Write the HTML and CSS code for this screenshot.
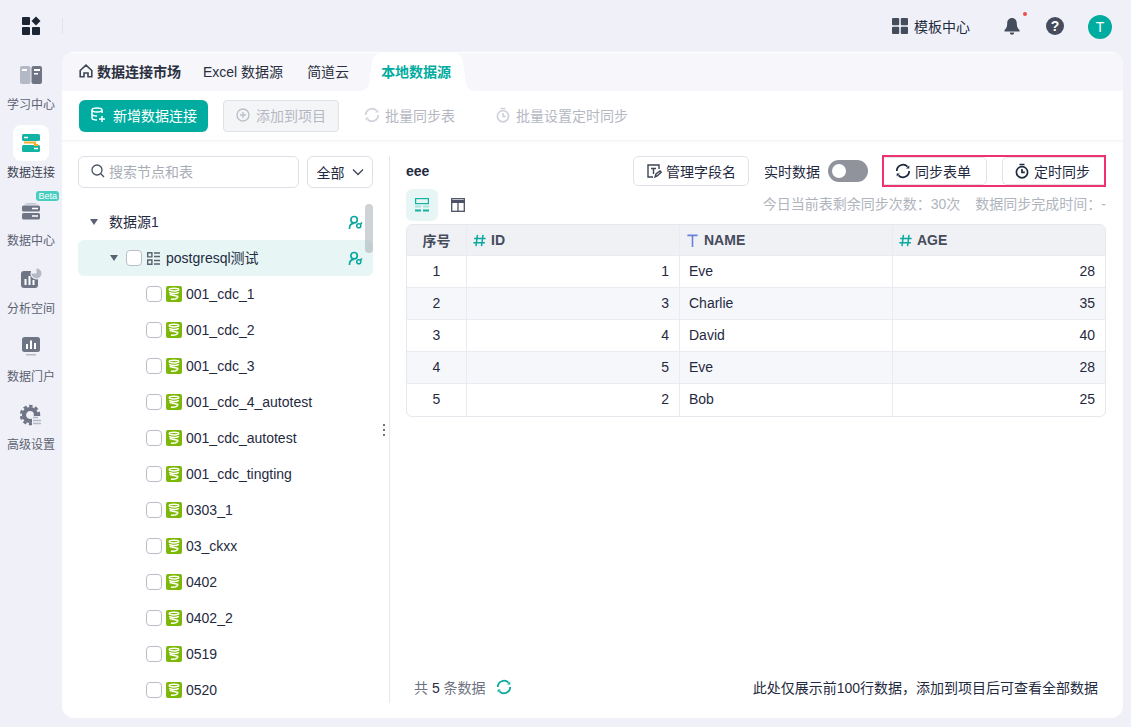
FILE: index.html
```html
<!DOCTYPE html>
<html lang="zh-CN">
<head>
  <meta charset="UTF-8" />
  <title>数据连接</title>
  <link rel="stylesheet" href="styles.css">
</head>
<body>
  <svg class="defs" width="0" height="0">
    <symbol id="i-db" viewBox="0 0 16 16">
      <rect width="16" height="16" rx="2" fill="#7db808"/>
      <g fill="none" stroke="#fff" stroke-width="1.500">
        <ellipse cx="8" cy="3.600" rx="4.800" ry="1.400"/>
        <path d="M3.200 6.400c2.500 1.600 7.500 1.600 9.600 0M3.600 8.600l8.800 1.900M5 13c2.300.6 5 .2 7-1.800"/>
      </g>
    </symbol>
    <symbol id="i-perm" viewBox="0 0 16 16">
      <circle cx="6.500" cy="5" r="3.400" fill="none" stroke="#0aa89e" stroke-width="1.800"/>
      <path d="M1.500 15c0-3.800 2-6 5-6" fill="none" stroke="#0aa89e" stroke-width="1.800"/>
      <circle cx="11.500" cy="11.500" r="2.200" fill="none" stroke="#0aa89e" stroke-width="1.600"/>
      <path d="M13 10l2-2" stroke="#0aa89e" stroke-width="1.600"/>
    </symbol>
    <symbol id="i-sync" viewBox="0 0 16 16">
      <path d="M1.800 8A6.200 6.200 0 0 1 12.500 3.700M14.200 8A6.200 6.200 0 0 1 3.500 12.300" fill="none" stroke="currentColor" stroke-width="1.800"/>
      <path d="M14.300 2.400v3.200h-3.200zM1.700 13.600v-3.200h3.200z" fill="currentColor"/>
    </symbol>
    <symbol id="i-timer" viewBox="0 0 16 16">
      <circle cx="8" cy="9.200" r="5.600" fill="none" stroke="currentColor" stroke-width="1.700"/>
      <path d="M5.500 1.500h5M8 6v3.400h2.800" fill="none" stroke="currentColor" stroke-width="1.700"/>
    </symbol>
    <symbol id="i-num" viewBox="0 0 14 14">
      <path d="M4.800 1 3.200 13M10.800 1 9.200 13M1.200 4.800h12.400M.4 9.400h12.400" fill="none" stroke="#0aa89e" stroke-width="1.600"/>
    </symbol>
    <symbol id="i-text" viewBox="0 0 14 14">
      <path d="M1.500 1.500h11M7 1.500V14" fill="none" stroke="#6b7fdc" stroke-width="1.700"/>
    </symbol>
  </svg>

  <header class="topbar">
    <div class="brand">
      <svg width="20" height="20" viewBox="0 0 20 20" fill="#1d2433">
        <rect x="0" y="1" width="8" height="8" rx="1"/>
        <rect x="0" y="11" width="8" height="8" rx="1"/>
        <rect x="10" y="11" width="8" height="8" rx="1"/>
        <path d="M14 .5 18.500 5 14 9.500 9.500 5z"/>
      </svg>
      <span class="brand-line"></span>
    </div>
    <div class="top-actions">
      <div class="top-link">
        <svg width="16" height="16" viewBox="0 0 16 16" fill="#454c5c">
          <rect width="7.200" height="7.200" rx="1"/><rect x="8.800" width="7.200" height="7.200" rx="1"/>
          <rect y="8.800" width="7.200" height="7.200" rx="1"/><rect x="8.800" y="8.800" width="7.200" height="7.200" rx="1"/>
        </svg>
        <span>模板中心</span>
      </div>
      <div class="bell">
        <svg width="16" height="19" viewBox="0 0 16 19" fill="#454c5c">
          <path d="M8 1c3 0 4.800 2.300 4.800 5.300 0 3.500.8 5 2.700 6.700v1.500H.5V13c1.900-1.700 2.700-3.200 2.700-6.700C3.200 3.300 5 1 8 1z"/>
          <path d="M5.800 15.500h4.400a2.200 2.200 0 0 1-4.400 0z"/>
        </svg>
        <span class="bell-dot"></span>
      </div>
      <span class="help">?</span>
      <span class="avatar">T</span>
    </div>
  </header>

  <div class="layout">
    <nav class="sidenav">
      <a class="nav-item">
        <span class="nav-icon">
          <svg width="24" height="20" viewBox="0 0 24 20">
            <rect x="1" y="1" width="10.500" height="18" rx="2" fill="#b4b9c6"/>
            <rect x="12.500" y="1" width="10.500" height="18" rx="2" fill="#6f7584"/>
            <path d="M3 4h5v2H3zM15 4h6v2h-6zM15 8h4v1.500h-4z" fill="#fff"/>
          </svg>
        </span>
        <span>学习中心</span>
      </a>
      <a class="nav-item active">
        <span class="nav-icon">
          <svg width="20" height="20" viewBox="0 0 20 20">
            <rect x="1" y="1" width="18" height="7" rx="1.500" fill="#12b3a4"/>
            <rect x="1" y="12" width="18" height="7" rx="1.500" fill="#12b3a4"/>
            <path d="M3 9.500h11v2.500h3" fill="none" stroke="#f7ae2b" stroke-width="2.200"/>
            <path d="M3 4.500h4M13 15.500h4" stroke="#fff" stroke-width="1.500"/>
          </svg>
        </span>
        <span>数据连接</span>
      </a>
      <a class="nav-item">
        <span class="nav-icon">
          <svg width="20" height="20" viewBox="0 0 20 20">
            <path d="M3 3.500C4 1.800 16 1.800 17 3.500z" fill="#b4b9c6"/>
            <rect x="1" y="4.500" width="18" height="6" rx="1.500" fill="#6f7584"/>
            <rect x="1" y="12" width="18" height="6.500" rx="1.500" fill="#6f7584"/>
            <path d="M11 7.500h6M11 15h6" stroke="#fff" stroke-width="1.500"/>
          </svg>
        </span>
        <span>数据中心</span>
        <span class="beta">Beta</span>
      </a>
      <a class="nav-item">
        <span class="nav-icon">
          <svg width="24" height="24" viewBox="0 0 24 24">
            <rect x="2" y="4" width="17" height="17" rx="3" fill="#6f7584"/>
            <path d="M6.500 12v6M10.500 9v9M14.500 13v5" stroke="#fff" stroke-width="2"/>
            <circle cx="17.500" cy="6.500" r="6" fill="#f0f1f8"/>
            <path d="M17.500 1.500a5 5 0 1 1-5 5h5z" fill="#b4b9c6"/>
          </svg>
        </span>
        <span>分析空间</span>
      </a>
      <a class="nav-item">
        <span class="nav-icon">
          <svg width="20" height="20" viewBox="0 0 20 20">
            <rect x="1" y="0" width="18" height="15" rx="2.500" fill="#6f7584"/>
            <path d="M6 7v5M10 3.500V12M14 6v6" stroke="#fff" stroke-width="2"/>
            <rect x="5" y="17" width="10" height="1.500" fill="#b4b9c6"/>
          </svg>
        </span>
        <span>数据门户</span>
      </a>
      <a class="nav-item">
        <span class="nav-icon">
          <svg width="22" height="22" viewBox="0 0 22 22">
            <circle cx="10" cy="11" r="6" fill="none" stroke="#6f7584" stroke-width="4.200"/>
            <circle cx="10" cy="11" r="9" fill="none" stroke="#6f7584" stroke-width="2.500" stroke-dasharray="3.400 2.500"/>
            <rect x="12" y="12" width="10" height="10" fill="#f0f1f8"/>
            <path d="M13 13.500h5M13 16.500h8M13 19.500h8" stroke="#b4b9c6" stroke-width="1.700"/>
          </svg>
        </span>
        <span>高级设置</span>
      </a>
    </nav>

    <main class="card">
      <div class="tabs">
        <a class="tab tab-market">
          <svg width="14" height="14" viewBox="0 0 14 14"><path d="M1.200 6.500 7 1.200l5.800 5.300v6.300H9V9H5v3.800H1.200z" fill="none" stroke="#3c4656" stroke-width="1.600"/></svg>
          数据连接市场
        </a>
        <a class="tab">Excel 数据源</a>
        <a class="tab">简道云</a>
        <a class="tab tab-active">
          <svg class="tab-shape" width="117" height="38" viewBox="0 0 117 38"><path d="M0 38c7 0 9.500-4 10.500-10L13 9c.8-5.500 4-9 9-9h73c5 0 8.200 3.500 9 9l2.500 19c1 6 3.500 10 10.500 10z" fill="#fff"/></svg>
          <span>本地数据源</span>
        </a>
      </div>

      <div class="toolbar">
        <button class="btn-primary">
          <svg width="16" height="16" viewBox="0 0 16 16" fill="none" stroke="#fff" stroke-width="1.500">
            <ellipse cx="7" cy="3" rx="5" ry="2"/><path d="M2 3v8c0 1.200 2 2 5 2M2 7c0 1 2 2 5 2M12 3v3"/><path d="M12 9v6M9 12h6"/>
          </svg>
          新增数据连接
        </button>
        <button class="btn-disabled">
          <svg width="14" height="14" viewBox="0 0 14 14" fill="none" stroke="#bcc0c9" stroke-width="1.400"><circle cx="7" cy="7" r="6"/><path d="M7 4v6M4 7h6"/></svg>
          添加到项目
        </button>
        <span class="tool-off"><svg width="16" height="16" class="ic-off"><use href="#i-sync"/></svg>批量同步表</span>
        <span class="tool-off"><svg width="16" height="16" class="ic-off"><use href="#i-timer"/></svg>批量设置定时同步</span>
      </div>

      <div class="content">
        <aside class="tree-panel">
          <div class="tree-search">
            <div class="search">
              <svg width="14" height="14" viewBox="0 0 14 14" fill="none" stroke="#4a5160" stroke-width="1.300"><circle cx="6" cy="6" r="5"/><path d="M9.800 9.800 13 13"/></svg>
              <span>搜索节点和表</span>
            </div>
            <div class="select">全部
              <svg width="12" height="8" viewBox="0 0 12 8" fill="none" stroke="#3c4656" stroke-width="1.300"><path d="M1 1.500 6 6.500l5-5"/></svg>
            </div>
          </div>
          <div class="tree">
            <span class="scroll-thumb"></span>
            <div class="row branch">
              <span class="caret caret-1"></span>
              <span class="label">数据源1</span>
              <svg class="perm" width="15" height="15"><use href="#i-perm"/></svg>
            </div>
            <div class="row branch row-selected">
              <span class="caret caret-2"></span>
              <span class="check"></span>
              <svg width="13" height="13" viewBox="0 0 13 13" class="schema" fill="none" stroke="#5a6170" stroke-width="1.400">
                <path d="M.7.700h4.200v4.200H.7zM.7 8h4.200v4.200H.7zM7 1h6M7 4.500h6M7 8.500h6M7 12h6"/>
              </svg>
              <span class="label">postgresql测试</span>
              <svg class="perm" width="15" height="15"><use href="#i-perm"/></svg>
            </div>
            <div class="row leaf"><span class="check"></span><svg width="16" height="16"><use href="#i-db"/></svg><span class="label">001_cdc_1</span></div>
            <div class="row leaf"><span class="check"></span><svg width="16" height="16"><use href="#i-db"/></svg><span class="label">001_cdc_2</span></div>
            <div class="row leaf"><span class="check"></span><svg width="16" height="16"><use href="#i-db"/></svg><span class="label">001_cdc_3</span></div>
            <div class="row leaf"><span class="check"></span><svg width="16" height="16"><use href="#i-db"/></svg><span class="label">001_cdc_4_autotest</span></div>
            <div class="row leaf"><span class="check"></span><svg width="16" height="16"><use href="#i-db"/></svg><span class="label">001_cdc_autotest</span></div>
            <div class="row leaf"><span class="check"></span><svg width="16" height="16"><use href="#i-db"/></svg><span class="label">001_cdc_tingting</span></div>
            <div class="row leaf"><span class="check"></span><svg width="16" height="16"><use href="#i-db"/></svg><span class="label">0303_1</span></div>
            <div class="row leaf"><span class="check"></span><svg width="16" height="16"><use href="#i-db"/></svg><span class="label">03_ckxx</span></div>
            <div class="row leaf"><span class="check"></span><svg width="16" height="16"><use href="#i-db"/></svg><span class="label">0402</span></div>
            <div class="row leaf"><span class="check"></span><svg width="16" height="16"><use href="#i-db"/></svg><span class="label">0402_2</span></div>
            <div class="row leaf"><span class="check"></span><svg width="16" height="16"><use href="#i-db"/></svg><span class="label">0519</span></div>
            <div class="row leaf"><span class="check"></span><svg width="16" height="16"><use href="#i-db"/></svg><span class="label">0520</span></div>
          </div>
          <span class="drag-dots"></span>
        </aside>

        <section class="detail">
          <div class="detail-head">
            <span class="table-name">eee</span>
            <button class="btn-outline">
              <svg width="16" height="16" viewBox="0 0 16 16" fill="none" stroke="#3c4656" stroke-width="1.400">
                <path d="M13 6V2H2v12h5"/><path d="M5 5.500h5M7.500 5.500V11"/><path d="M9 14l1-3 4-3 1.200 1.200-4 3.800z"/>
              </svg>
              管理字段名
            </button>
            <span class="live-label">实时数据</span>
            <span class="toggle"><span class="knob"></span></span>
            <div class="sync-box">
              <button class="btn-sync btn-sync-a"><svg width="16" height="16"><use href="#i-sync"/></svg>同步表单</button>
              <button class="btn-sync btn-sync-b"><svg width="16" height="16"><use href="#i-timer"/></svg>定时同步</button>
            </div>
          </div>

          <div class="detail-sub">
            <span class="view-btn view-on">
              <svg width="14" height="14" viewBox="0 0 14 14" fill="none" stroke="#12b3a4" stroke-width="1.200">
                <rect x=".6" y=".6" width="12.800" height="5"/><path d="M0 8.500h6M8 8.500h6" stroke="#a6e3dc" stroke-width="2"/><path d="M0 12.500h6M8 12.500h6" stroke-width="2"/>
              </svg>
            </span>
            <span class="view-btn">
              <svg width="14" height="14" viewBox="0 0 14 14" fill="none" stroke="#4b5265" stroke-width="1.300">
                <rect x=".7" y=".7" width="12.600" height="12.600"/><path d="M0 3.500h14" stroke-width="3"/><path d="M7 5v8"/>
              </svg>
            </span>
            <span class="sync-note">今日当前表剩余同步次数：30次</span>
            <span class="sync-note">数据同步完成时间：-</span>
          </div>

          <div class="grid">
            <div class="cell head num">序号</div>
            <div class="cell head"><svg width="13" height="13"><use href="#i-num"/></svg>ID</div>
            <div class="cell head"><svg width="13" height="13"><use href="#i-text"/></svg>NAME</div>
            <div class="cell head"><svg width="13" height="13"><use href="#i-num"/></svg>AGE</div>

            <div class="cell num">1</div><div class="cell right">1</div><div class="cell">Eve</div><div class="cell right">28</div>
            <div class="cell num alt">2</div><div class="cell right alt">3</div><div class="cell alt">Charlie</div><div class="cell right alt">35</div>
            <div class="cell num">3</div><div class="cell right">4</div><div class="cell">David</div><div class="cell right">40</div>
            <div class="cell num alt">4</div><div class="cell right alt">5</div><div class="cell alt">Eve</div><div class="cell right alt">28</div>
            <div class="cell num">5</div><div class="cell right">2</div><div class="cell">Bob</div><div class="cell right">25</div>
          </div>

          <div class="detail-foot">
            <span class="count">共 <b>5</b> 条数据</span>
            <svg class="refresh" width="16" height="16"><use href="#i-sync"/></svg>
            <span class="foot-note">此处仅展示前100行数据，添加到项目后可查看全部数据</span>
          </div>
        </section>
      </div>
    </main>
  </div>
</body>
</html>
```

FILE: styles.css
```css
* {
  box-sizing: border-box;
}
html, body {
  height: 100%;
}
body {
  margin: 0;
  background: #f0f1f8;
  color: #1f2a3f;
  font-family: "Liberation Sans", "Noto Sans CJK SC", sans-serif;
  font-size: 14px;
  overflow: hidden;
}
button {
  font: inherit;
  cursor: pointer;
}
.defs {
  position: absolute;
}

/* top bar */
.topbar {
  height: 52px;
  display: flex;
  align-items: center;
  justify-content: space-between;
  padding: 0 19px 0 22px;
}
.brand {
  display: flex;
  align-items: center;
  gap: 20px;
}
.brand-line {
  width: 1px;
  height: 16px;
  background: #e2e4ec;
}
.top-actions {
  display: flex;
  align-items: center;
}
.top-link {
  display: flex;
  align-items: center;
  gap: 6px;
  margin-right: 34px;
  padding-bottom: 1px;
}
.bell {
  position: relative;
  display: flex;
  margin-right: 26px;
}
.bell-dot {
  position: absolute;
  top: -5px;
  right: -7px;
  width: 4px;
  height: 4px;
  border-radius: 50%;
  background: #ee4d4d;
}
.help {
  width: 18px;
  height: 18px;
  border-radius: 50%;
  background: #454c5c;
  color: #fff;
  font-size: 14px;
  font-weight: bold;
  line-height: 18px;
  text-align: center;
  margin-right: 24px;
}
.avatar {
  width: 24px;
  height: 24px;
  margin-top: 2px;
  border-radius: 50%;
  background: #00ac9f;
  color: #fff;
  line-height: 24px;
  text-align: center;
}

.layout {
  display: flex;
  height: 666px;
}

/* left nav */
.sidenav {
  width: 62px;
  flex: none;
  display: flex;
  flex-direction: column;
  align-items: center;
  padding-top: 5px;
  gap: 5px;
}
.nav-item {
  position: relative;
  display: flex;
  flex-direction: column;
  align-items: center;
  gap: 4px;
  font-size: 12px;
  line-height: 16px;
  color: #5c6272;
  height: 63px;
}
.nav-item.active {
  color: #3c4252;
}
.nav-icon {
  width: 36px;
  height: 36px;
  border-radius: 8px;
  display: flex;
  align-items: center;
  justify-content: center;
}
.active .nav-icon {
  background: #fff;
}
.beta {
  position: absolute;
  top: -2px;
  right: -4px;
  background: #48cdbf;
  color: #fff;
  font-size: 9px;
  line-height: 10px;
  padding: 0 2px;
  border-radius: 3px;
}

/* main card */
.card {
  width: 1061px;
  background: #fff;
  border-radius: 12px;
  display: flex;
  flex-direction: column;
  overflow: hidden;
}
.tabs {
  height: 39px;
  flex: none;
  background: #f6f6fb;
  border-top: 1px solid #fff;
  display: flex;
  align-items: stretch;
  padding-left: 17px;
}
.tab {
  display: flex;
  align-items: center;
  gap: 4px;
  padding: 0 12px 2px;
  color: #2a3040;
}
.tab-market {
  padding: 0 10px 2px 0;
  font-weight: bold;
}
.tab-active {
  position: relative;
  width: 117px;
  margin-left: -2px;
  padding: 0 0 2px 22px;
  color: #00ac9f;
  font-weight: bold;
}
.tab-active span {
  position: relative;
}
.tab-shape {
  position: absolute;
  left: 0;
  top: 0;
}
.toolbar {
  height: 50px;
  flex: none;
  display: flex;
  align-items: center;
  padding-left: 17px;
  border-bottom: 1px solid #f4f4f8;
  box-shadow: 0 1px 3px rgba(30, 40, 70, .03);
}
.toolbar > * {
  padding-bottom: 2px;
}
.btn-primary {
  height: 32px;
  width: 129px;
  border: none;
  border-radius: 6px;
  background: #00ac9f;
  color: #fff;
  display: flex;
  align-items: center;
  justify-content: center;
  gap: 7px;
  padding-top: 0;
  padding-left: 0;
  padding-right: 0;
  margin-right: 15px;
}
.btn-disabled {
  height: 32px;
  width: 116px;
  border: 1px solid #e0e2e8;
  border-radius: 4px;
  background: #f4f5f7;
  color: #b5b8c2;
  display: flex;
  align-items: center;
  justify-content: center;
  gap: 6px;
  padding-top: 0;
  padding-left: 0;
  padding-right: 0;
  margin-right: 25px;
}
.tool-off {
  display: flex;
  align-items: center;
  gap: 5px;
  color: #b5b8c2;
  margin-right: 40px;
}
.ic-off {
  color: #cfd2da;
}

.content {
  flex: 1;
  display: flex;
  min-height: 0;
}

/* tree panel */
.tree-panel {
  position: relative;
  width: 328px;
  flex: none;
  margin: 15px 0;
  padding-left: 16px;
  border-right: 1px solid #e6e8ee;
  display: flex;
  flex-direction: column;
}
.tree-search {
  display: flex;
  gap: 8px;
  width: 295px;
  height: 32px;
  flex: none;
}
.search {
  width: 221px;
  border: 1px solid #dcdfe6;
  border-radius: 6px;
  display: flex;
  align-items: center;
  gap: 4px;
  padding: 0 0 2px 12px;
  color: #a9adb8;
}
.select {
  width: 66px;
  border: 1px solid #dcdfe6;
  border-radius: 6px;
  display: flex;
  align-items: center;
  justify-content: center;
  gap: 7px;
  padding-bottom: 1px;
}
.tree {
  position: relative;
  margin-top: 16px;
  width: 295px;
  flex: 1;
  overflow: hidden;
}
.scroll-thumb {
  position: absolute;
  top: 0;
  right: 0;
  width: 8px;
  height: 49px;
  border-radius: 4px;
  background: rgba(160, 165, 175, .5);
}
.row {
  height: 36px;
  display: flex;
  align-items: center;
  gap: 6px;
  padding-right: 10px;
}
.row-selected {
  background: #e7f6f5;
  border-radius: 6px;
}
.branch .label {
  padding-bottom: 2px;
}
.leaf {
  padding-left: 68px;
  gap: 4px;
}
.caret {
  width: 0;
  height: 0;
  border-left: 4.500px solid transparent;
  border-right: 4.500px solid transparent;
  border-top: 6px solid #5a6170;
}
.caret-1 {
  margin: 0 5px 0 12px;
}
.caret-2 {
  margin: 0 2px 0 32px;
}
.check {
  width: 16px;
  height: 16px;
  border: 1px solid #b9bdc8;
  border-radius: 4px;
  background: #fff;
  flex: none;
}
.schema {
  margin-left: -1px;
}
.label {
  flex: 1;
  white-space: nowrap;
}
.drag-dots {
  position: absolute;
  top: 273px;
  right: 4px;
  width: 2px;
  height: 2px;
  border-radius: 50%;
  background: #3c4656;
  box-shadow: 0 -5px 0 #3c4656, 0 5px 0 #3c4656;
}

/* right panel */
.detail {
  flex: 1;
  min-width: 0;
  padding: 14px 17px 15px 16px;
  display: flex;
  flex-direction: column;
}
.detail-head {
  height: 32px;
  display: flex;
  align-items: center;
  flex: none;
}
.table-name {
  font-weight: bold;
  flex: 1;
}
.btn-outline {
  height: 30px;
  width: 116px;
  border: 1px solid #e1e3ea;
  border-radius: 5px;
  background: #fff;
  color: inherit;
  display: flex;
  align-items: center;
  justify-content: center;
  gap: 4px;
  padding: 0;
  margin-right: 15px;
}
.live-label {
  margin-right: 8px;
}
.toggle {
  width: 40px;
  height: 22px;
  border-radius: 11px;
  background: #90939c;
  padding: 4px 0 0 4px;
  margin-right: 14px;
}
.knob {
  display: block;
  width: 14px;
  height: 14px;
  border-radius: 50%;
  background: #fff;
}
.sync-box {
  width: 224px;
  height: 32px;
  border: 2px solid #f0316f;
  display: flex;
  justify-content: space-between;
}
.btn-sync {
  border: 1px solid #e1e3ea;
  background: #fff;
  color: inherit;
  display: flex;
  align-items: center;
  gap: 4px;
  padding: 0 0 1px;
}
.btn-sync-a {
  width: 103px;
  border-left: none;
  border-radius: 0 5px 5px 0;
  padding-left: 11px;
}
.btn-sync-b {
  width: 102px;
  border-right: none;
  border-radius: 5px 0 0 5px;
  padding-left: 11px;
}
.detail-sub {
  height: 37px;
  flex: none;
  display: flex;
  align-items: flex-start;
  padding-top: 2px;
  gap: 4px;
}
.view-btn {
  width: 32px;
  height: 32px;
  border-radius: 6px;
  display: flex;
  align-items: center;
  justify-content: center;
}
.view-on {
  background: #e7f6f5;
}
.sync-note {
  color: #b0b4bd;
  line-height: 30px;
  margin-left: 11px;
}
.view-btn + .sync-note {
  margin-left: auto;
}

.grid {
  display: grid;
  grid-template-columns: 60px 213px 213px 212px;
  grid-template-rows: 31px repeat(5, 32px);
  border: 1px solid #e6e8ee;
  border-radius: 6px;
  overflow: hidden;
  flex: none;
}
.cell {
  display: flex;
  align-items: center;
  padding: 0 10px 2px 9px;
  border-right: 1px solid #e9ebf0;
  border-bottom: 1px solid #e9ebf0;
  gap: 5px;
}
.cell:nth-child(4n) {
  border-right: none;
}
.cell:nth-last-child(-n+4) {
  border-bottom: none;
}
.head {
  background: #f0f1f5;
  font-weight: bold;
  color: #454c5c;
  padding: 0 10px 0 6px;
}
.alt {
  background: #f6f7fa;
}
.num {
  justify-content: center;
  padding: 0 0 2px;
}
.head.num {
  padding: 0;
}
.right {
  justify-content: flex-end;
  padding-right: 10px;
}

.detail-foot {
  margin-top: auto;
  height: 32px;
  flex: none;
  display: flex;
  align-items: center;
  padding: 0 8px;
}
.count {
  color: #6c7280;
}
.count b {
  font-weight: normal;
  color: #1f2a3f;
}
.refresh {
  color: #0aa89e;
  margin-left: 10px;
}
.foot-note {
  margin-left: auto;
}
```
